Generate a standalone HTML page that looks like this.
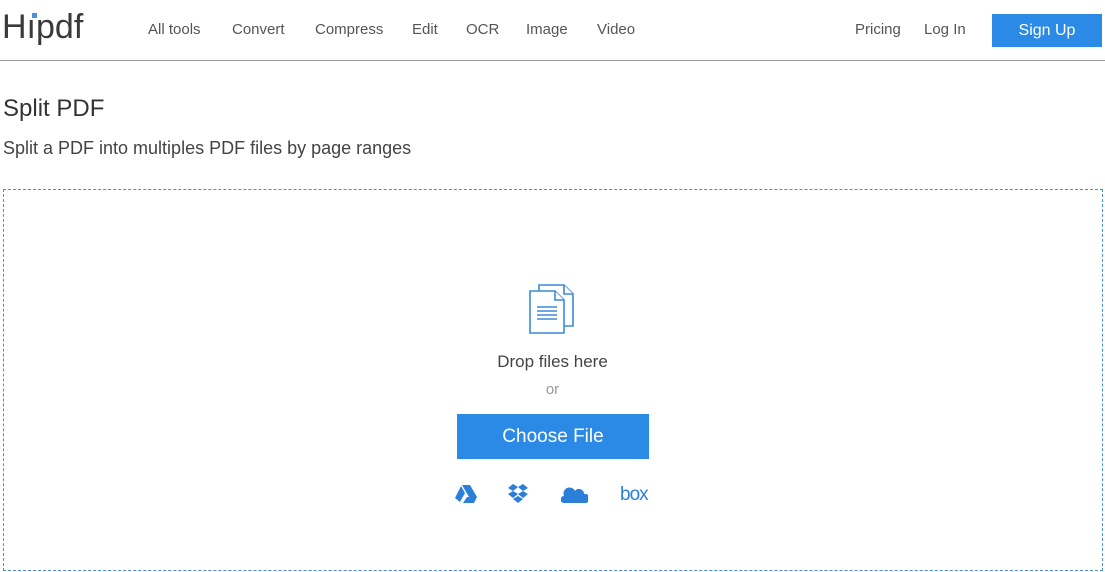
<!DOCTYPE html>
<html><head><meta charset="utf-8"><style>
*{margin:0;padding:0;box-sizing:border-box}
body{width:1105px;height:572px;background:#fff;font-family:"Liberation Sans",sans-serif;color:#333;position:relative;overflow:hidden}
.logo{position:absolute;left:2px;top:8px;font-size:34px;color:#3a3a3a;letter-spacing:0px}
.logo .d{position:absolute;left:30px;top:5px;width:5px;height:5px;background:#4a90d9}
.nav{position:absolute;top:21px;font-size:15px;color:#555}
.hr{position:absolute;left:0;top:60px;width:1105px;height:1px;background:#999}
.btn{position:absolute;background:#2b8ae6;color:#fff;text-align:center}
h1{position:absolute;left:3px;top:95px;font-size:24px;font-weight:normal;color:#333}
.sub{position:absolute;left:3px;top:138px;font-size:18px;color:#444}
.box{position:absolute;left:3px;top:189px;width:1100px;height:382px;border:1px dashed #4a90c4}
.c{position:absolute;left:0;width:1105px;text-align:center}
</style></head><body>
<div class="logo">Hıpdf<span class="d"></span></div>
<div class="nav" style="left:148px">All tools</div>
<div class="nav" style="left:232px">Convert</div>
<div class="nav" style="left:315px">Compress</div>
<div class="nav" style="left:412px">Edit</div>
<div class="nav" style="left:466px">OCR</div>
<div class="nav" style="left:526px">Image</div>
<div class="nav" style="left:597px">Video</div>
<div class="nav" style="left:855px">Pricing</div>
<div class="nav" style="left:924px">Log In</div>
<div class="btn" style="left:992px;top:14px;width:110px;height:33px;line-height:33px;font-size:16px">Sign Up</div>
<div class="hr"></div>
<h1>Split PDF</h1>
<div class="sub">Split a PDF into multiples PDF files by page ranges</div>
<div class="box"></div>
<svg style="position:absolute;left:528px;top:283px" width="50" height="54" viewBox="0 0 50 54" fill="#fff" stroke="#3a8ad8" stroke-width="1.6">
<path d="M11 2h25l9 9v32H11z"/><path d="M36 2v9h9"/>
<path d="M2 8h25l9 9v33H2z"/><path d="M27 8v9h9"/>
<path d="M9 24h20M9 28h20M9 32h20M9 36h20" stroke-width="1.4"/>
</svg>
<div class="c" style="top:352px;font-size:17px;color:#444">Drop files here</div>
<div class="c" style="top:381px;font-size:15px;color:#999">or</div>
<div class="btn" style="left:457px;top:414px;width:192px;height:45px;line-height:45px;font-size:19px">Choose File</div>
<svg style="position:absolute;left:455px;top:485px" width="22" height="19" viewBox="0 0 22 19" fill="#2b7fd9"><path d="M7 0h8l7 12h-8z"/><path d="M6 1l4 7-5 9-5-4z"/><path d="M8 18l4-6h10l-3 6z"/></svg>
<svg style="position:absolute;left:507px;top:484px" width="22" height="20" viewBox="0 0 22 20" fill="#2b7fd9"><path d="M6 0l5 3-5 4-5-3zM16 0l5 4-5 3-5-4zM1 10l5-3 5 3-5 4zM21 10l-5-3-5 3 5 4zM6 15l5-3 5 3-5 4z"/></svg>
<svg style="position:absolute;left:561px;top:486px" width="27" height="17" viewBox="0 0 27 17" fill="#2b7fd9"><path d="M3 17a3 3 0 010-7 6 6 0 0111-5 5 5 0 019 3 4 4 0 012 9z"/></svg>
<div style="position:absolute;left:620px;top:484px;font-size:19px;color:#2b7fd9;letter-spacing:-1px">box</div>
</body></html>
